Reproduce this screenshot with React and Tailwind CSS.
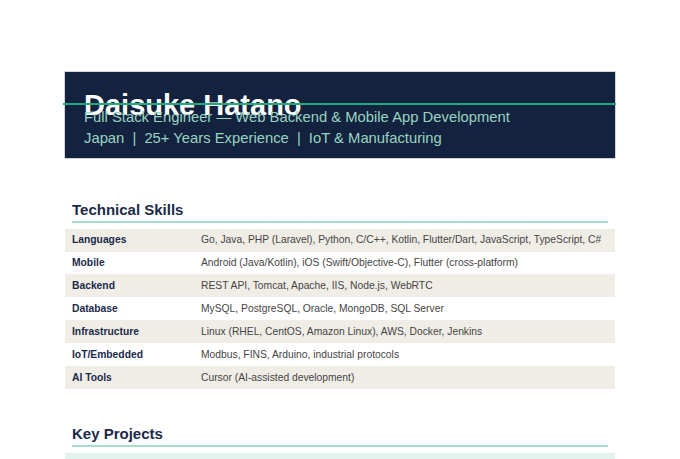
export default function App() {
  const skills = [
    ["Languages", "Go, Java, PHP (Laravel), Python, C/C++, Kotlin, Flutter/Dart, JavaScript, TypeScript, C#"],
    ["Mobile", "Android (Java/Kotlin), iOS (Swift/Objective-C), Flutter (cross-platform)"],
    ["Backend", "REST API, Tomcat, Apache, IIS, Node.js, WebRTC"],
    ["Database", "MySQL, PostgreSQL, Oracle, MongoDB, SQL Server"],
    ["Infrastructure", "Linux (RHEL, CentOS, Amazon Linux), AWS, Docker, Jenkins"],
    ["IoT/Embedded", "Modbus, FINS, Arduino, industrial protocols"],
    ["AI Tools", "Cursor (AI-assisted development)"],
  ];

  return (
    <div className="h-screen overflow-hidden bg-white font-['Liberation_Sans',Arial,sans-serif]">
      <div className="mx-auto w-[550px] pt-[72px]">
        {/* header */}
        <header className="relative bg-[#13233f] px-[19px] pt-[19px] pb-[8px] shadow-[0_0_0_1px_#d4d6da]">
          <div className="absolute top-[31px] left-[-2px] right-[-1px] h-[2px] bg-[#22aa7c] z-10" />
          <h1 className="text-[29px] leading-none font-bold text-white">Daisuke Hatano</h1>
          <div className="mt-[-13.5px] text-[14.8px] leading-[21.6px] text-[#98d4c1]">
            <p>Full Stack Engineer — Web Backend &amp; Mobile App Development</p>
            <p>
              Japan <span className="mx-[4px]">|</span> 25+ Years Experience{" "}
              <span className="mx-[4px]">|</span> IoT &amp; Manufacturing
            </p>
          </div>
        </header>

        {/* skills */}
        <section className="mt-[43.5px]">
          <h2 className="mx-[7px] border-b-2 border-[#a9dccd] pb-[2px] text-[15px] leading-[18px] font-bold text-[#1b2a4a]">
            Technical Skills
          </h2>
          <div className="mt-[5.5px]">
            {skills.map(([label, value], i) => (
              <div
                key={label}
                className={`flex h-[22.9px] items-center text-[10.3px] ${i % 2 === 0 ? "bg-[#f0ede7]" : "bg-white"}`}
              >
                <div className="w-[136px] pl-[7px] font-bold text-[#1b2a4a]">{label}</div>
                <div className="text-[#454545]">{value}</div>
              </div>
            ))}
          </div>
        </section>

        {/* projects */}
        <section className="mt-[35.6px]">
          <h2 className="mx-[7px] border-b-2 border-[#a9dccd] pb-[2px] text-[15px] leading-[18px] font-bold text-[#1b2a4a]">
            Key Projects
          </h2>
          <div className="mt-[6px] h-[80px] bg-[#e3f4ee]" />
        </section>
      </div>
    </div>
  );
}
